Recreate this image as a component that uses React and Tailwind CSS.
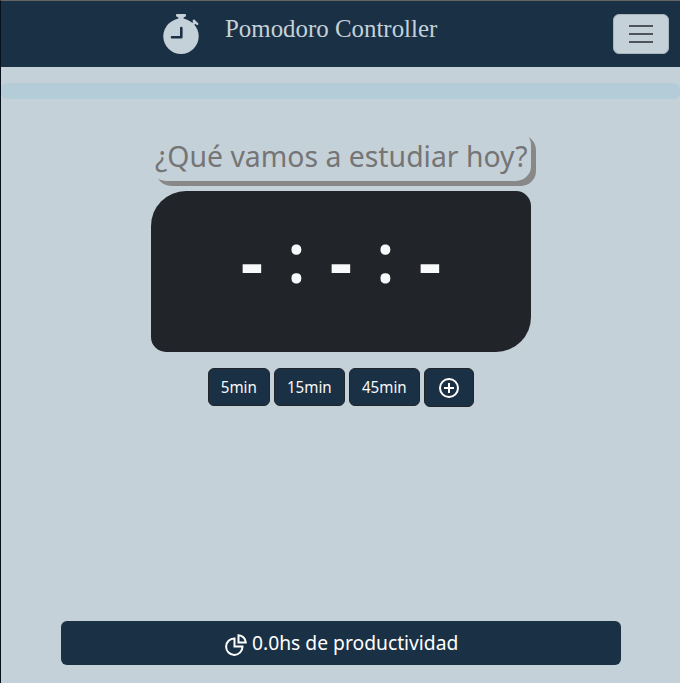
import React from "react";

function Stopwatch() {
  return (
    <svg className="h-10 w-9" viewBox="0 0 36 40" fill="#c5d1d9">
      <path d="M14 0h8q1 0 1 1v.8q0 1-1 1l-1.4.6V7h-5.2V3.4L14 2.8q-1 0-1-1V1q0-1 1-1Z" />
      <circle cx="18" cy="22.3" r="17.7" />
      <path d="m30.2 5.7 1.2-.3 4 4-.3 1.4-1 .4-1.8-1.4-1.7 1.8-2-2 1.6-1.6-.9-1Z" />
      <path d="M18.3 14v9.2H9" fill="none" stroke="#1a3045" strokeWidth="2.6" strokeLinecap="round" strokeLinejoin="round" />
    </svg>
  );
}

function PlusCircle() {
  return (
    <svg className="size-6" viewBox="0 0 24 24" fill="none" stroke="#fff" strokeWidth="2">
      <circle cx="12" cy="12" r="9" />
      <path d="M12 7v10M7 12h10" />
    </svg>
  );
}

function PieIcon() {
  return (
    <svg className="mt-1 h-6 w-6 shrink-0" viewBox="0 0 24 24" fill="none" stroke="#fff" strokeWidth="2">
      <path d="M10.5 5.5a8.2 8.2 0 1 0 8 8h-8Z" />
      <path d="M14.5 2.2v7.3h7.3a7.6 7.6 0 0 0-7.3-7.3Z" />
    </svg>
  );
}

const btn =
  "flex h-[38px] items-center justify-center rounded-md border border-[#212529] bg-[#1a3045] pt-0.5 pl-px text-[#f8f9fa]";

const colon = "-mt-1 text-[71px] font-medium";

export default function App() {
  return (
    <div className="flex h-[683px] w-[680px] flex-col overflow-hidden border-t border-l border-t-[#666563] border-l-[#06101c] bg-[#c5d1d9] font-['Noto_Sans','Open_Sans',sans-serif]">
      <header className="flex h-[66px] shrink-0 bg-[#1a3045] pt-[13px] pr-[11px] pl-[162px]">
        <Stopwatch />
        <h1 className="ml-[26px] h-8 font-['Liberation_Serif',serif] text-[24.9px] leading-[30px] whitespace-nowrap text-[#c5d1d9]">
          Pomodoro Controller
        </h1>
        <button className="ml-auto flex h-10 w-14 flex-col items-center justify-center gap-1.5 rounded-md border border-[#a9b4bc] bg-[#c5d1d9]">
          <span className="h-0.5 w-6 bg-[#4e5359]" />
          <span className="h-0.5 w-6 bg-[#4e5359]" />
          <span className="h-0.5 w-6 bg-[#4e5359]" />
        </button>
      </header>

      <div className="mt-4 h-4 shrink-0 rounded-md bg-[#b3ccd8]" />

      <main className="flex flex-1 flex-col items-center">
        <div className="mt-[31px] flex h-[51px] w-[380px] items-center justify-center rounded-[15px] bg-[#c5d1d9] pt-0.5 pl-0.5 shadow-[5px_5px_0_#888]">
          <span className="origin-center scale-x-[0.969] text-[29.3px] whitespace-nowrap text-[#757575]">
            ¿Qué vamos a estudiar hoy?
          </span>
        </div>

        <section className="mt-[10px] flex h-[161px] w-[380px] justify-center rounded-tl-[35px] rounded-tr-[15px] rounded-br-[35px] rounded-bl-[15px] bg-[#212529] pt-[24px] pl-px">
          <div className="grid h-[90px] grid-cols-[44.5px_44.5px_44.5px_44.5px_44.5px] text-center font-['Noto_Sans',sans-serif] text-[70px] leading-[90px] font-bold text-[#f8f9fa]">
            <span>-</span>
            <span className={colon}>:</span>
            <span>-</span>
            <span className={colon}>:</span>
            <span>-</span>
          </div>
        </section>

        <div className="mt-4 flex items-start gap-1">
          <button className={`${btn} w-[62px]`}><span className="scale-x-[0.96] text-[15.8px]">5min</span></button>
          <button className={`${btn} w-[71px]`}><span className="scale-x-[0.96] text-[15.8px]">15min</span></button>
          <button className={`${btn} w-[71px]`}><span className="scale-x-[0.96] text-[15.8px]">45min</span></button>
          <button className="flex h-[39px] w-[50px] items-center justify-center rounded-md border border-[#212529] bg-[#1a3045]">
            <PlusCircle />
          </button>
        </div>

        <button className="mt-auto mb-[18px] flex h-11 w-[560px] items-center justify-center gap-1 rounded-md bg-[#1a3045] text-white">
          <PieIcon />
          <span className="w-[206px] origin-left scale-x-[0.988] text-left text-[19.5px] whitespace-nowrap">
            0.0hs de productividad
          </span>
        </button>
      </main>
    </div>
  );
}
